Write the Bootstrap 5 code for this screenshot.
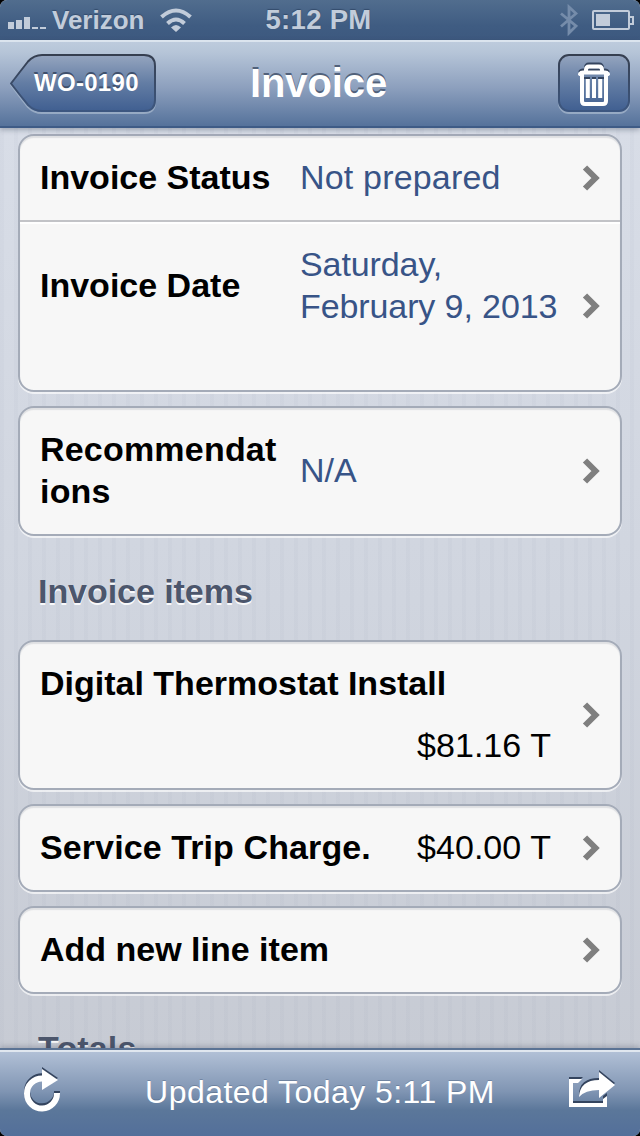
<!DOCTYPE html>
<html lang="en">
<head>
<meta charset="utf-8">
<meta name="viewport" content="width=device-width, initial-scale=1">
<title>Invoice</title>
<link href="https://cdn.jsdelivr.net/npm/bootstrap@5.3.0/dist/css/bootstrap.min.css" rel="stylesheet">
<style>
html,body{height:1136px;overflow:hidden;background:#000}
body{font-family:"Liberation Sans",Arial,sans-serif;font-size:34px;line-height:42px;color:#000}
.screen{width:640px;height:1136px;background:repeating-linear-gradient(90deg,rgba(120,130,155,.045) 0 4px,transparent 4px 14px),linear-gradient(#d8dde7 128px,#d0d5df 600px,#c7cbd4 1048px);border-radius:7px;overflow:hidden}
.status-strip{height:40px;background:linear-gradient(#516d8e,#3f5c82 65%,#3d597f);color:#c2ccda;font-weight:700;line-height:40px;text-shadow:0 -1px 1px #344c6c;padding:0 6px 0 8px}
.status-strip .side{width:200px}
.carrier{font-size:26px;letter-spacing:0;margin-left:5px}
.clock{font-size:27.5px;letter-spacing:.3px;margin-right:5px}
.title-bar{height:88px;background:linear-gradient(#bdcbdd,#b6c5d8 12%,#8c9fbd 55%,#55729b);border-top:2px solid #dbe4ee;border-bottom:2px solid #3e5b86;box-shadow:0 2px 5px rgba(50,60,80,.35);position:relative;z-index:2;padding:12px 10px 14px;color:#fff}
.title-bar h1{font-size:40px;line-height:58px;font-weight:700;letter-spacing:-.1px;text-shadow:0 -2px 0 #51617a}
.back{width:147px;height:60px}
.back svg{position:absolute;left:0;top:0}
.back span{position:relative;font-size:24px;font-weight:700;line-height:57px;padding-left:24px;letter-spacing:.3px;text-shadow:0 -2px 0 #3f506c}
.bin{width:72px;height:60px}
.list-area{height:920px;overflow:hidden;padding:6px 18px 0}
.panel{background:#f7f7f7;border:2px solid #a4abb8;border-radius:16px;box-shadow:0 2px 0 rgba(255,255,255,.65),inset 0 2px 1px #dfe0e3;margin-bottom:14px;padding:0 20px}
.panel.sized{padding-bottom:2px}
.panel.first{padding:0;height:258px}
.line{padding:0 20px}
.line.one{height:86px;padding-bottom:3px;border-bottom:2px solid #c2c3c7;box-shadow:0 2px 0 #fff}
.line.two{height:168px}
.line.two .lbl,.line.two .val{padding-bottom:42px}
.chev{width:18px;height:26px;flex:none}
.sized .chev,.one .chev{position:relative;top:1px}
.lbl{font-weight:700;width:260px}
.rec{letter-spacing:.2px}
.val{color:#385487;flex:1}
.price{padding-right:31px;letter-spacing:.05px}
.section{font-weight:700;font-size:34px;color:#4c566c;text-shadow:0 2px 0 rgba(255,255,255,.9);line-height:40px;padding-left:20px;letter-spacing:-.05px}
.bottom-bar{height:88px;border-top:2px solid #5b7394;background:linear-gradient(#e0e7ef 0 2px,#b1c0d6 2px,#8095b3 48%,#5b779a 70%,#536f9a);color:#fff;padding:0 24px 3px;box-shadow:0 -2px 5px rgba(50,60,80,.25);position:relative;z-index:2}
.updated{font-size:32px;letter-spacing:.45px;margin-left:9px;text-shadow:0 -1px 0 rgba(60,80,110,.35)}
</style>
</head>
<body>
<svg width="0" height="0" class="position-absolute"><defs>
<linearGradient id="btn" x1="0" y1="0" x2="0" y2="1"><stop offset="0" stop-color="#95a5bf"/><stop offset=".5" stop-color="#637da4"/><stop offset="1" stop-color="#405f91"/></linearGradient>
<linearGradient id="edge" x1="0" y1="0" x2="0" y2="1"><stop offset="0" stop-color="#363f50"/><stop offset="1" stop-color="#3d5780"/></linearGradient>
<symbol id="chev" viewBox="0 0 18 26"><path d="M3 2.500 13.500 13 3 23.500" fill="none" stroke="#7f7f7f" stroke-width="6"/></symbol>
</defs></svg>
<div class="screen d-flex flex-column">
  <div class="status-strip d-flex justify-content-between align-items-center flex-shrink-0">
    <div class="side d-flex align-items-center">
      <svg width="39" height="20" fill="#c2ccda"><path d="M0 12h6v7H0zM8 10h6v9H8zM16 7h6v12h-6zM24 17h6v2h-6zM32 17h6v2h-6z"/></svg>
      <span class="carrier">Verizon</span>
      <svg class="ms-3" width="32" height="26" viewBox="0 0 32 26"><g fill="none" stroke="#c2ccda" stroke-width="4"><path d="M1.500 10Q16-3 30.500 10M7.500 16.500Q16 8.500 24.500 16.500"/></g><path d="M11 20.500Q16 15.500 21 20.500L16 25z" fill="#c2ccda"/></svg>
    </div>
    <span class="clock">5:12 PM</span>
    <div class="side d-flex justify-content-end align-items-center">
      <svg style="margin-right:14px" width="18" height="32" viewBox="0 0 18 32"><path d="M1 9.500 16 22 9 29V3l7 6.500L1 22.500" fill="none" stroke="#758caa" stroke-width="2.800"/></svg>
      <svg width="42" height="22" viewBox="0 0 42 22"><rect x="1" y="2" width="36" height="18" rx="1" fill="none" stroke="#c2ccda" stroke-width="2"/><path d="M4 5h14v12H4z" fill="#c2ccda"/><path d="M38 8h3v7h-3" fill="none" stroke="#c2ccda" stroke-width="2"/></svg>
    </div>
  </div>
  <header class="title-bar d-flex justify-content-between flex-shrink-0">
    <div class="back position-relative">
      <svg width="147" height="60"><path d="M1 31Q9 20 18 8.500 24 3 32 3h102q11 0 11 11v34q0 11-11 11H32q-8 0-14-6Q9 42 1 31z" fill="none" stroke="#a3b4cb" stroke-width="2" opacity=".8"/><path d="M1 29.500Q9 19 18 7.500 24 1 32 1h102q11 0 11 11v34q0 11-11 11H32q-8 0-14-6Q9 40 1 29.500z" fill="url(#btn)" stroke="url(#edge)" stroke-width="2"/></svg>
      <span>WO-0190</span>
    </div>
    <h1 class="mb-0 position-absolute start-0 end-0 text-center" style="padding-right:3px">Invoice</h1>
    <svg class="bin" viewBox="0 0 72 60"><rect x="1" y="3" width="70" height="56" rx="10" fill="none" stroke="#a3b4cb" stroke-width="2" opacity=".8"/><rect x="1" y="1" width="70" height="56" rx="10" fill="url(#btn)" stroke="url(#edge)" stroke-width="2"/>
      <g fill="none" stroke="#34445e" stroke-width="4"><path d="M28 16v-2q0-3.500 3-3.500h10q3 0 3 3.500v2M22 18.500q1-2 3-2h22q2 0 3 2"/></g>
      <g fill="none" stroke="#fff" stroke-width="4"><path d="M28 18v-2q0-3.500 3-3.500h10q3 0 3 3.500v2M24 19v28q0 3 3 3h18q3 0 3-3V19"/><path d="M22 20q1-1.500 3-1.500h22q2 0 3 1.500" stroke-linecap="round"/><path d="M29.800 25v19M36 25v19M42.200 25v19"/></g><path d="M26 24h6M34 24h4M40 24h6" stroke="#34445e" stroke-width="2"/></svg>
  </header>
  <main class="list-area flex-shrink-0">
    <section class="panel first">
      <div class="line one d-flex align-items-center"><span class="lbl">Invoice Status</span><span class="val" style="letter-spacing:.18px">Not prepared</span><svg class="chev"><use href="#chev"/></svg></div>
      <div class="line two d-flex align-items-center"><span class="lbl">Invoice Date</span><span class="val text-nowrap" style="letter-spacing:-.1px">Saturday,<br>February 9, 2013</span><svg class="chev"><use href="#chev"/></svg></div>
    </section>
    <section class="panel sized d-flex align-items-center" style="height:130px"><span class="lbl rec">Recommendat<br>ions</span><span class="val">N/A</span><svg class="chev"><use href="#chev"/></svg></section>
    <h2 class="section mb-0" style="height:90px;padding-top:21px">Invoice items</h2>
    <section class="panel sized d-flex align-items-center" style="height:150px"><div class="flex-fill d-flex flex-column" style="gap:20px"><strong>Digital Thermostat Install</strong><span class="price text-end">$81.16 T</span></div><svg class="chev"><use href="#chev"/></svg></section>
    <section class="panel sized d-flex align-items-center" style="height:88px"><strong class="flex-fill" style="letter-spacing:.1px">Service Trip Charge.</strong><span class="price">$40.00 T</span><svg class="chev"><use href="#chev"/></svg></section>
    <section class="panel sized d-flex align-items-center" style="height:88px"><strong class="flex-fill">Add new line item</strong><svg class="chev"><use href="#chev"/></svg></section>
    <h2 class="section mb-0" style="padding-top:20px;letter-spacing:.15px">Totals</h2>
  </main>
  <footer class="bottom-bar d-flex justify-content-between align-items-center flex-shrink-0">
    <svg style="margin-top:-3px" width="38" height="46" viewBox="0 0 38 46"><path d="M20 9.500A15 15 0 1 0 33 24" fill="none" stroke="#34445e" stroke-width="6"/><path d="M18 0 34 11 18 21z" fill="#34445e"/><path d="M18 11.500A15 15 0 1 0 33 26" fill="none" stroke="#fff" stroke-width="6"/><path d="M18 2 34 13 18 23z" fill="#fff"/></svg>
    <span class="updated">Updated Today 5:11 PM</span>
    <svg style="margin-top:-5px" width="47" height="38" viewBox="0 0 47 38"><g fill="#34445e"><path d="M0 7h14l-4 4H4v20h30v-5l4-3v13H0z"/><path d="M10 25Q10 8 30 8V0l16 13-16 14v-8Q16 18 10 25z"/></g><g fill="#fff"><path d="M0 9h13l-4 4H4v20h30v-4l4-3v11H0z"/><path d="M10 27Q11 10 30 10V2l16 13-16 13v-8Q16 20 10 27z"/></g></svg>
  </footer>
</div>
<script src="https://cdn.jsdelivr.net/npm/bootstrap@5.3.0/dist/js/bootstrap.bundle.min.js"></script>
</body>
</html>
